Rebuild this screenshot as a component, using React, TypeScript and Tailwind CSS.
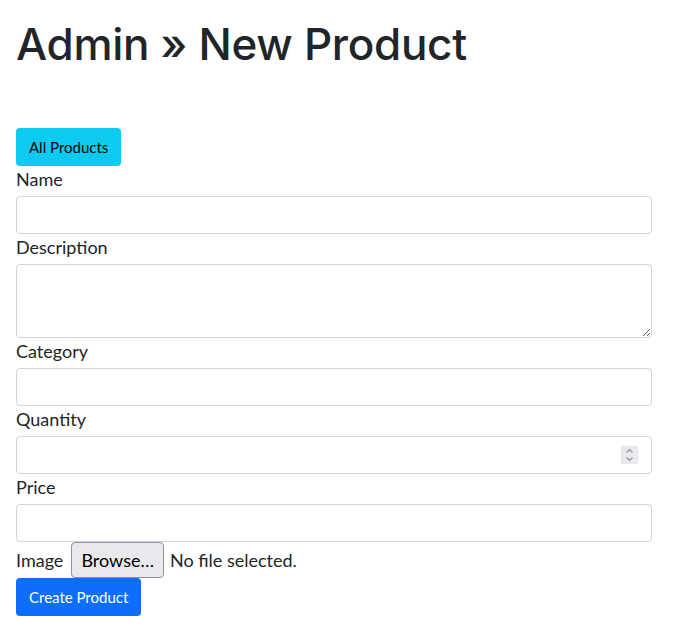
import React from "react";

const bodyFont = { fontFamily: "'Source Sans Pro', Lato, 'Liberation Sans', sans-serif" };

function Label({ children }: { children: React.ReactNode }) {
  return <label className="block text-[18px] leading-[26px] mb-[4px]">{children}</label>;
}

const inputCls =
  "block w-[636px] h-[38px] rounded-[4px] border border-[#ced4da] bg-white px-3 text-[18px] outline-none";

export default function App() {
  return (
    <div className="bg-white text-[#212529] px-4 min-h-[634px]" style={bodyFont}>
      <h1 className="pt-[18px] text-[44px] leading-[53px] font-medium font-['Inter',sans-serif] tracking-[-0.3px] mb-[57px]">
        Admin » New Product
      </h1>

      <button className="h-[38px] px-[13px] rounded-[4px] bg-[#0dcaf0] text-black text-[15px]">
        All Products
      </button>

      <form className="flex flex-col">
        <Label>Name</Label>
        <input type="text" className={inputCls} />

        <Label>Description</Label>
        <textarea className="block w-[636px] h-[74px] rounded-[4px] border border-[#ced4da] bg-white px-3 text-[18px] outline-none" />

        <Label>Category</Label>
        <input type="text" className={inputCls} />

        <Label>Quantity</Label>
        <div className="flex items-center w-[636px] h-[38px] rounded-[4px] border border-[#ced4da] bg-white pl-3 pr-[13px]">
          <input type="text" className="flex-1 min-w-0 outline-none text-[18px]" />
          <div className="flex flex-col items-center justify-center w-[17px] h-[18px] bg-[#e9e9ed]">
            <svg width="9" height="14" viewBox="0 0 9 14" fill="none" stroke="#8f8f9d" strokeWidth="1.2">
              <path d="M1.5 4.5 L4.5 1.5 L7.5 4.5" />
              <path d="M1.5 9.5 L4.5 12.5 L7.5 9.5" />
            </svg>
          </div>
        </div>

        <Label>Price</Label>
        <input type="text" className={inputCls} />

        <div className="flex items-center h-[36px] text-[18px]">
          <span>Image</span>
          <span className="ml-[8px] h-[36px] px-[9px] flex items-center rounded-[4px] border border-[#8f8f9d] bg-[#e9e9ed] text-black">
            Browse…
          </span>
          <span className="ml-[6px]">No file selected.</span>
        </div>

        <div>
          <button type="button" className="h-[38px] px-[13px] rounded-[4px] bg-[#0d6efd] text-white text-[15px]">
            Create Product
          </button>
        </div>
      </form>
    </div>
  );
}
